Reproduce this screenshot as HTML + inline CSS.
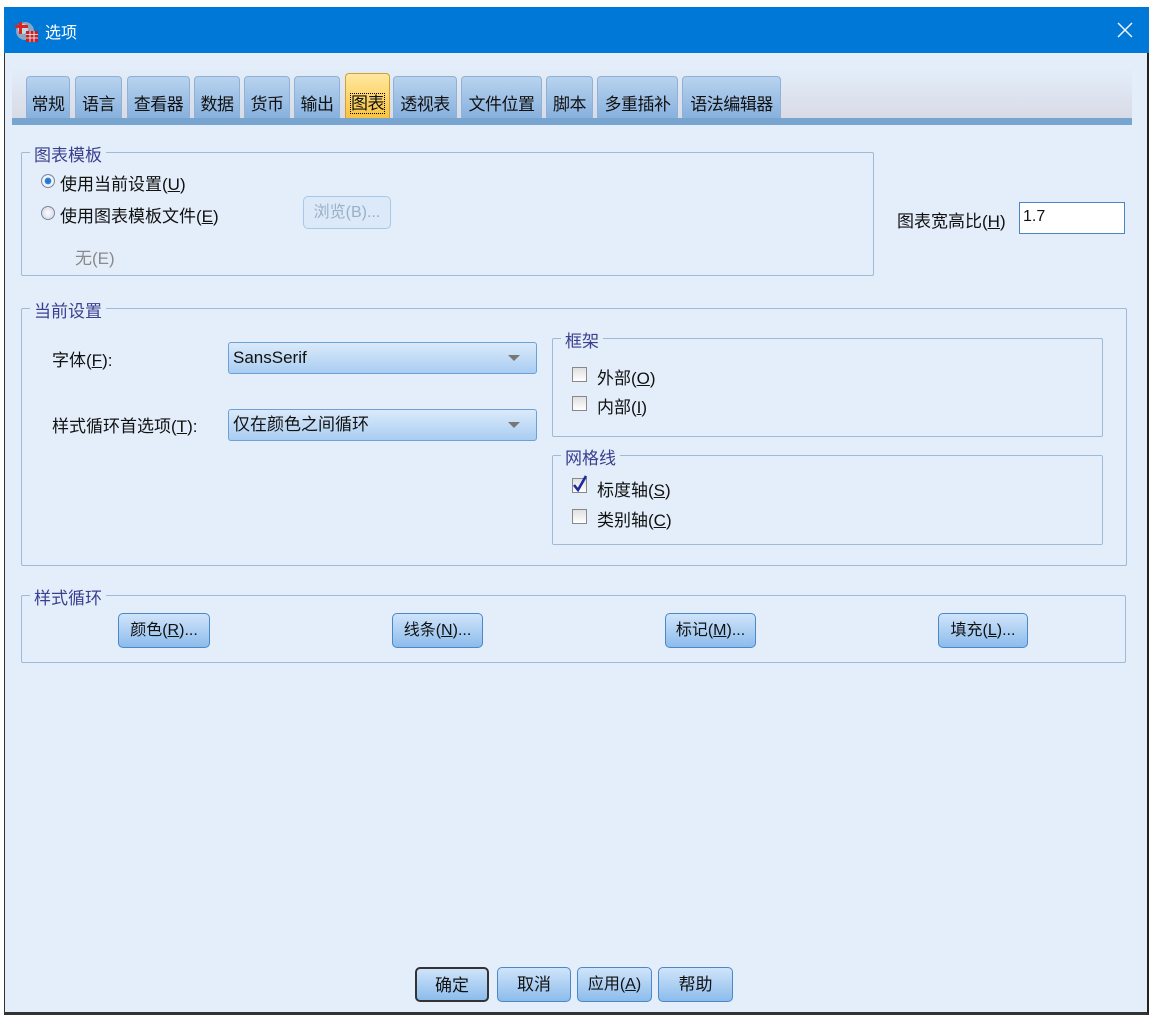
<!DOCTYPE html>
<html><head><meta charset="utf-8"><style>
*{box-sizing:border-box;margin:0;padding:0}
body{width:1159px;height:1018px;background:#fff;position:relative;overflow:hidden;font-family:"Liberation Sans","Noto Sans CJK SC","WenQuanYi Zen Hei",sans-serif;font-size:17px;color:#111}
.a{position:absolute;white-space:nowrap}
#win{left:4px;top:7px;width:1145px;height:1008px;background:#e3eefa;border-left:1px solid #333;border-right:2px solid #222;border-bottom:3px solid #333}
#title{left:4px;top:7px;width:1145px;height:46px;background:#0078d7;color:#fff}
.tabstrip{left:12px;top:68px;width:1120px;height:50px;background:linear-gradient(#e3eefa,#d8dbe6)}
.bar{left:12px;top:118px;width:1120px;height:7px;background:#77a5d0}
.tab{position:absolute;top:76px;height:43px;border:1px solid #8fb1d6;border-bottom:none;border-radius:4px 4px 0 0;background:linear-gradient(#b9d3ee,#86b0de);padding-top:13px;text-align:center;font-size:17px;white-space:nowrap;letter-spacing:-0.5px}
.tab.on{background:linear-gradient(#ffe8a0,#f9c23c);border-color:#d0a030;top:73px;height:46px;padding-top:15px}
.tab.on span{border:1px dotted #000}
.grp{position:absolute;border:1px solid #9ebad6;border-radius:2px}
.gt{position:absolute;top:-12px;left:8px;background:#e3eefa;padding:0 4px;color:#3b3f8f;font-size:17px;white-space:nowrap}
.btn{position:absolute;height:35px;border:1px solid #4a88c8;border-radius:5px;background:linear-gradient(#cfe4fa,#8cbcec);text-align:center;line-height:33px;font-size:16px;white-space:nowrap}
.radio{position:absolute;width:14px;height:14px;border-radius:50%;border:1px solid #7a8aa0;background:radial-gradient(circle,#fff 0,#dde 70%)}
.radio.on{background:radial-gradient(circle,#1f6fc9 0,#2b84dd 35%,#fff 45%,#dde 80%)}
.cb{position:absolute;width:15px;height:15px;border:1px solid #888;background:linear-gradient(#e0e0e0,#fff)}
.combo{position:absolute;height:32px;border:1px solid #6aa2d8;border-radius:3px;background:linear-gradient(#dbeafa,#a9cdf2);padding-left:4px;line-height:30px;font-size:17px}
.arr{position:absolute;right:16px;top:12px;width:0;height:0;border-left:6px solid transparent;border-right:6px solid transparent;border-top:6px solid #777}
u{text-decoration:underline}
</style></head><body>
<div id="win" class="a"></div>
<div id="title" class="a">
  <svg class="a" style="left:11px;top:14px" width="24" height="22"><circle cx="10" cy="10" r="9" fill="#8aa7c2"/><circle cx="8" cy="8" r="5" fill="#c6d6e4"/><rect x="4" y="1" width="3" height="12" fill="#d22"/><rect x="0" y="4" width="13" height="3" fill="#d22"/><rect x="11" y="10" width="12" height="11" fill="#c0242a"/><path d="M11 13.5h12M11 17h12M15 10v11M19 10v11" stroke="#fff" stroke-width="0.8"/></svg>
  <div class="a" style="left:41px;top:12px;font-size:16px">选项</div>
  <svg class="a" style="left:1113px;top:15px" width="16" height="16"><path d="M1 1L15 15M15 1L1 15" stroke="#fff" stroke-width="1.4"/></svg>
</div>
<div class="a tabstrip"></div>
<div class="tab" style="left:26px;width:44px">常规</div>
<div class="tab" style="left:75px;width:47px">语言</div>
<div class="tab" style="left:127px;width:63px">查看器</div>
<div class="tab" style="left:194px;width:46px">数据</div>
<div class="tab" style="left:244px;width:46px">货币</div>
<div class="tab" style="left:294px;width:46px">输出</div>
<div class="tab on" style="left:345px;width:45px"><span>图表</span></div>
<div class="tab" style="left:393px;width:64px">透视表</div>
<div class="tab" style="left:461px;width:81px">文件位置</div>
<div class="tab" style="left:546px;width:47px">脚本</div>
<div class="tab" style="left:597px;width:81px">多重插补</div>
<div class="tab" style="left:682px;width:99px">语法编辑器</div>
<div class="a bar"></div>

<div class="grp" style="left:21px;top:152px;width:853px;height:124px"><div class="gt">图表模板</div></div>
<div class="radio on" style="left:41px;top:174px"></div>
<div class="a" style="left:60px;top:170px">使用当前设置(<u>U</u>)</div>
<div class="radio" style="left:41px;top:206px"></div>
<div class="a" style="left:60px;top:202px">使用图表模板文件(<u>E</u>)</div>
<div class="btn" style="left:303px;top:196px;width:88px;height:33px;line-height:31px;color:#9ab0c8;background:#dbe9f8;border-color:#a9c8e8">浏览(B)...</div>
<div class="a" style="left:75px;top:244px;color:#8a8a8a">无(E)</div>
<div class="a" style="left:897px;top:207px">图表宽高比(<u>H</u>)</div>
<div class="a" style="left:1019px;top:202px;width:106px;height:32px;background:#fff;border:1px solid #4a86c4;padding:5px 3px;font-size:16px">1.7</div>

<div class="grp" style="left:21px;top:308px;width:1106px;height:258px"><div class="gt">当前设置</div></div>
<div class="a" style="left:52px;top:346px">字体(<u>F</u>):</div>
<div class="combo" style="left:228px;top:342px;width:309px">SansSerif<div class="arr"></div></div>
<div class="a" style="left:52px;top:412px">样式循环首选项(<u>T</u>):</div>
<div class="combo" style="left:228px;top:409px;width:309px">仅在颜色之间循环<div class="arr"></div></div>

<div class="grp" style="left:552px;top:338px;width:551px;height:99px"><div class="gt">框架</div></div>
<div class="cb" style="left:572px;top:367px"></div><div class="a" style="left:597px;top:364px">外部(<u>O</u>)</div>
<div class="cb" style="left:572px;top:396px"></div><div class="a" style="left:597px;top:393px">内部(<u>I</u>)</div>
<div class="grp" style="left:552px;top:455px;width:551px;height:90px"><div class="gt">网格线</div></div>
<div class="cb" style="left:572px;top:478px"></div><svg class="a" style="left:572px;top:474px" width="16" height="19"><path d="M2 11L6 16L14 2" fill="none" stroke="#1c2a9c" stroke-width="2.6"/></svg><div class="a" style="left:597px;top:476px">标度轴(<u>S</u>)</div>
<div class="cb" style="left:572px;top:509px"></div><div class="a" style="left:597px;top:506px">类别轴(<u>C</u>)</div>

<div class="grp" style="left:21px;top:595px;width:1105px;height:68px"><div class="gt">样式循环</div></div>
<div class="btn" style="left:118px;top:613px;width:92px">颜色(<u>R</u>)...</div>
<div class="btn" style="left:392px;top:613px;width:91px">线条(<u>N</u>)...</div>
<div class="btn" style="left:665px;top:613px;width:91px">标记(<u>M</u>)...</div>
<div class="btn" style="left:938px;top:613px;width:90px">填充(<u>L</u>)...</div>

<div class="btn" style="left:415px;top:967px;width:74px;border:2px solid #333;font-size:17px">确定</div>
<div class="btn" style="left:497px;top:967px;width:74px;font-size:17px">取消</div>
<div class="btn" style="left:577px;top:967px;width:75px">应用(<u>A</u>)</div>
<div class="btn" style="left:658px;top:967px;width:75px;font-size:17px">帮助</div>
</body></html>
